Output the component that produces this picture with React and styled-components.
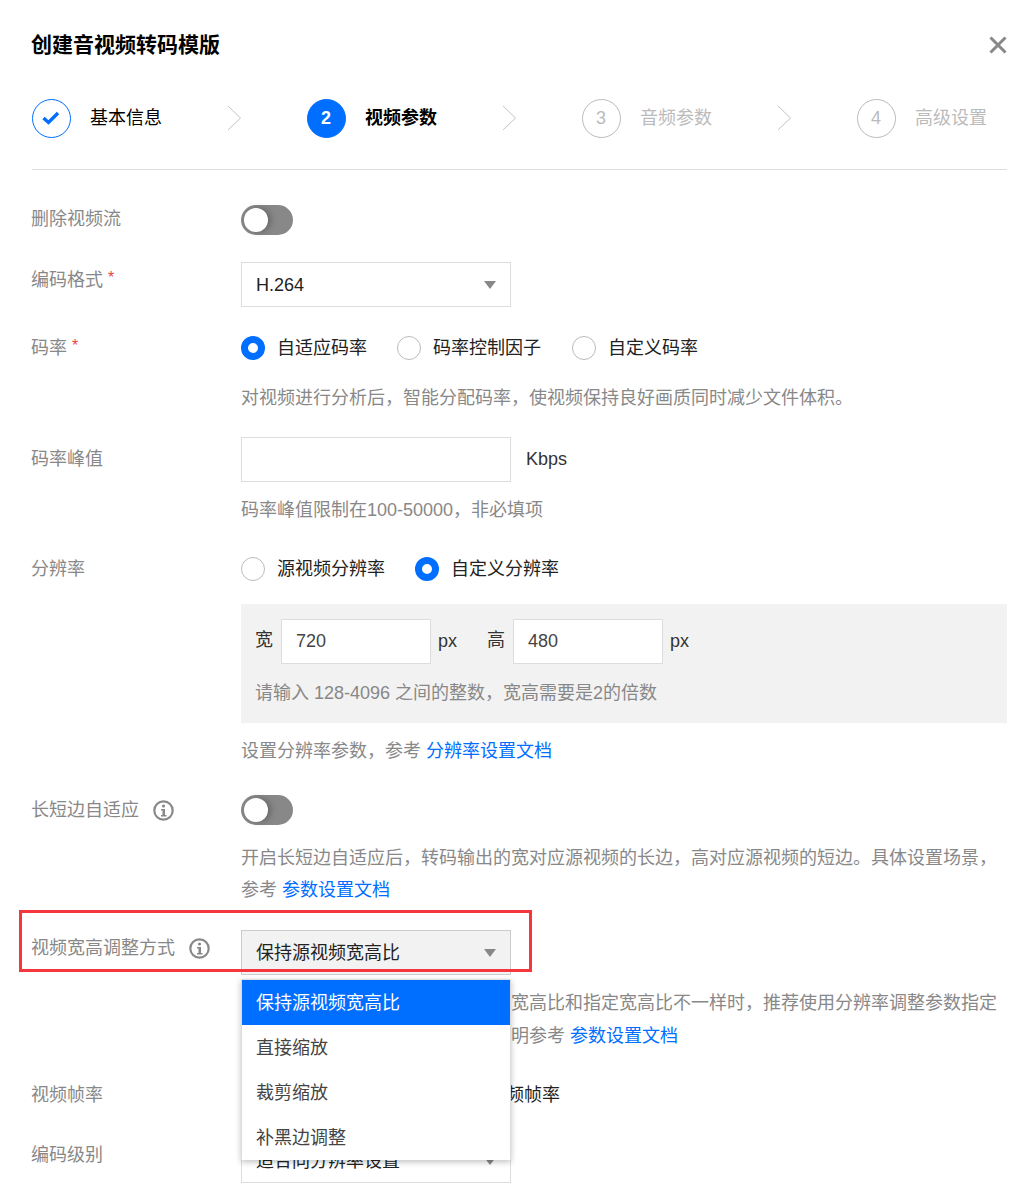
import React from "react";
import styled, { createGlobalStyle } from "styled-components";

const Global = createGlobalStyle`
  html, body { margin: 0; padding: 0; background: #fff; }
  body { font-family: "Liberation Sans", "Noto Sans CJK SC", sans-serif; font-size: 18px; color: #000; }
  *, *::before, *::after { box-sizing: border-box; }
`;

const Dialog = styled.div`
  position: relative;
  width: 1033px;
  height: 1190px;
  overflow: hidden;
  padding: 0 26px 0 31px;
  background: #fff;
`;
const Header = styled.div`
  display: flex;
  justify-content: space-between;
  align-items: center;
  height: 30px;
  margin-top: 30px;
`;
const Title = styled.h2`
  margin: 0;
  font-size: 21px;
  line-height: 30px;
  font-weight: 700;
  color: #000;
`;
const Close = styled.svg`
  width: 18px;
  height: 18px;
  display: block;
`;
const Steps = styled.div`
  display: flex;
  margin: 38px 0 0 1px;
  padding-bottom: 31px;
  border-bottom: 1px solid #ddd;
`;
const Step = styled.div`
  display: flex;
  align-items: center;
  width: 275px;
  height: 40px;
  flex: none;
`;
const StepCircle = styled.div`
  width: 39px;
  height: 39px;
  border-radius: 50%;
  border: 1px solid ${p => (p.$state === "todo" ? "#bbb" : "#006eff")};
  background: ${p => (p.$state === "active" ? "#006eff" : "#fff")};
  color: ${p => (p.$state === "active" ? "#fff" : "#bbb")};
  font-weight: ${p => (p.$state === "active" ? 700 : 400)};
  display: flex;
  align-items: center;
  justify-content: center;
  padding-right: 1px;
  font-size: 18px;
  flex: none;
`;
const StepText = styled.span`
  margin-left: 19px;
  width: 137px;
  font-size: 18px;
  line-height: 24px;
  flex: none;
  color: ${p => (p.$state === "todo" ? "#bbb" : "#000")};
  font-weight: ${p => (p.$state === "active" ? 700 : 400)};
`;
const Chev = styled.svg`
  width: 15px;
  height: 26px;
  display: block;
  flex: none;
`;
const Row = styled.div`
  display: grid;
  grid-template-columns: 210px 1fr;
  align-items: start;
  margin-top: ${p => p.$mt}px;
  position: relative;
`;
const Label = styled.div`
  display: flex;
  align-items: center;
  color: #888;
  font-size: 18px;
  line-height: 24px;
  padding-top: ${p => p.$pt || 0}px;
`;
const Star = styled.span`
  color: #e54545;
  margin-left: 5px;
  font-size: 16px;
  position: relative;
  top: -2px;
`;
const InfoIcon = styled.svg`
  width: 21px;
  height: 21px;
  margin-left: 14px;
  display: block;
`;
const Toggle = styled.div`
  width: 52px;
  height: 30px;
  border-radius: 15px;
  background: #888;
  position: relative;
  &::after {
    content: "";
    position: absolute;
    left: 3px;
    top: 3px;
    width: 24px;
    height: 24px;
    border-radius: 50%;
    background: #fff;
    box-shadow: 3px 0 6px rgba(0,0,0,0.25);
  }
`;
const Select = styled.div`
  width: 270px;
  height: 45px;
  border: 1px solid ${p => (p.$open ? "#ccc" : "#ddd")};
  background: ${p => (p.$open ? "#f2f2f2" : "#fff")};
  display: flex;
  align-items: center;
  justify-content: space-between;
  padding: 0 14px;
  color: #222;
  font-size: 18px;
  line-height: 24px;
`;
const Caret = styled.span`
  width: 0;
  height: 0;
  border-left: 6.5px solid transparent;
  border-right: 6.5px solid transparent;
  border-top: 8px solid #888;
`;
const Radios = styled.div`
  display: flex;
  align-items: center;
  height: 24px;
  position: relative;
  top: 1px;
`;
const Radio = styled.div`
  display: flex;
  align-items: center;
  margin-right: ${p => p.$mr}px;
  font-size: 18px;
  line-height: 24px;
  color: #222;
  &::before {
    content: "";
    width: 24px;
    height: 24px;
    border-radius: 50%;
    flex: none;
    margin-right: 12px;
    background: #fff;
    border: ${p => (p.$on ? "7px solid #006eff" : "1px solid #bbb")};
  }
`;
const Desc = styled.div`
  margin-top: ${p => p.$mt}px;
  margin-left: 210px;
  color: #888;
  font-size: 18px;
  line-height: ${p => p.$lh || 32}px;
  white-space: nowrap;
`;
const Link = styled.a`
  color: #006eff;
  text-decoration: none;
`;
const Inline = styled.div`
  display: flex;
  align-items: center;
`;
const Input = styled.div`
  width: ${p => p.$w}px;
  height: 45px;
  border: 1px solid #ddd;
  background: #fff;
  display: flex;
  align-items: center;
  padding: 0 14px;
  font-size: 18px;
  color: #444;
`;
const Unit = styled.span`
  margin-left: ${p => p.$ml}px;
  color: #333;
  font-size: 18px;
`;
const SizeBox = styled.div`
  margin: 23px 0 0 210px;
  height: 119px;
  background: #f2f2f2;
  padding: 15px 14px;
`;
const SizeLabel = styled.span`
  margin: 0 8px 0 ${p => p.$ml || 0}px;
  padding-bottom: 3px;
  line-height: 24px;
  color: #333;
`;
const SizeHint = styled.div`
  margin-top: 13px;
  color: #888;
  line-height: 32px;
`;
const Menu = styled.div`
  position: absolute;
  left: 210px;
  top: 49px;
  width: 270px;
  background: #fff;
  border: 1px solid #ddd;
  border-bottom: 0;
  box-shadow: 0 2px 6px rgba(0,0,0,0.25);
  z-index: 3;
`;
const MenuItem = styled.div`
  height: 45px;
  display: flex;
  align-items: center;
  padding: 0 14px 4px;
  font-size: 18px;
  background: ${p => (p.$active ? "#006eff" : "#fff")};
  color: ${p => (p.$active ? "#fff" : "#444")};
`;
const Highlight = styled.div`
  position: absolute;
  left: 19px;
  top: 910px;
  width: 513px;
  height: 62px;
  border: 3px solid #f5363c;
  z-index: 4;
  pointer-events: none;
`;

const Check = () => (
  <svg width="18" height="14" viewBox="0 0 18 14" fill="none">
    <path d="M1.5 7l5 4.5L16 2" stroke="#006eff" strokeWidth="3.4" />
  </svg>
);
const Chevron = () => (
  <Chev viewBox="0 0 15 26" fill="none">
    <path d="M1 1l12.5 12L1 25" stroke="#c4c4c4" strokeWidth="1" />
  </Chev>
);
const Info = () => (
  <InfoIcon viewBox="0 0 21 21" fill="none">
    <circle cx="10.5" cy="10.5" r="9.2" stroke="#888" strokeWidth="2.2" />
    <circle cx="10.5" cy="6" r="1.6" fill="#888" />
    <path d="M8 9h4v6h1.5v1.5H8V15h1.5v-4.5H8z" fill="#888" />
  </InfoIcon>
);

const steps = [
  ["基本信息", "done"],
  ["视频参数", "active"],
  ["音频参数", "todo"],
  ["高级设置", "todo"],
];

export default function App() {
  return (
    <Dialog>
      <Global />
      <Header>
        <Title>创建音视频转码模版</Title>
        <Close viewBox="0 0 18 18" fill="none">
          <path d="M1.5 1.5l15 15M16.5 1.5l-15 15" stroke="#888" strokeWidth="3" />
        </Close>
      </Header>
      <Steps>
        {steps.map(([t, s], i) => (
          <Step key={t}>
            <StepCircle $state={s}>{s === "done" ? <Check /> : i + 1}</StepCircle>
            <StepText $state={s}>{t}</StepText>
            {i < 3 && <Chevron />}
          </Step>
        ))}
      </Steps>

      <Row $mt={35}>
        <Label $pt={2}>删除视频流</Label>
        <Toggle />
      </Row>
      <Row $mt={27}>
        <Label $pt={6}>编码格式<Star>*</Star></Label>
        <Select>H.264<Caret /></Select>
      </Row>
      <Row $mt={28}>
        <Label $pt={1}>码率<Star>*</Star></Label>
        <Radios>
          <Radio $on $mr={30}>自适应码率</Radio>
          <Radio $mr={31}>码率控制因子</Radio>
          <Radio $mr={0}>自定义码率</Radio>
        </Radios>
      </Row>
      <Desc $mt={22}>对视频进行分析后，智能分配码率，使视频保持良好画质同时减少文件体积。</Desc>
      <Row $mt={23}>
        <Label $pt={10}>码率峰值</Label>
        <Inline>
          <Input $w={270} />
          <Unit $ml={15}>Kbps</Unit>
        </Inline>
      </Row>
      <Desc $mt={12}>码率峰值限制在100-50000，非必填项</Desc>
      <Row $mt={30}>
        <Label $pt={1}>分辨率</Label>
        <Radios>
          <Radio $mr={30}>源视频分辨率</Radio>
          <Radio $on $mr={0}>自定义分辨率</Radio>
        </Radios>
      </Row>
      <SizeBox>
        <Inline>
          <SizeLabel>宽</SizeLabel>
          <Input $w={150}>720</Input>
          <Unit $ml={7}>px</Unit>
          <SizeLabel $ml={30}>高</SizeLabel>
          <Input $w={150}>480</Input>
          <Unit $ml={7}>px</Unit>
        </Inline>
        <SizeHint>请输入 128-4096 之间的整数，宽高需要是2的倍数</SizeHint>
      </SizeBox>
      <Desc $mt={12}>设置分辨率参数，参考 <Link>分辨率设置文档</Link></Desc>
      <Row $mt={28}>
        <Label $pt={3}>长短边自适应<Info /></Label>
        <Toggle />
      </Row>
      <Desc $mt={17}>
        开启长短边自适应后，转码输出的宽对应源视频的长边，高对应源视频的短边。具体设置场景，<br />
        参考 <Link>参数设置文档</Link>
      </Desc>
      <Row $mt={24}>
        <Label $pt={6}>视频宽高调整方式<Info /></Label>
        <Select $open>保持源视频宽高比<Caret /></Select>
        <Menu>
          <MenuItem $active>保持源视频宽高比</MenuItem>
          <MenuItem>直接缩放</MenuItem>
          <MenuItem>裁剪缩放</MenuItem>
          <MenuItem>补黑边调整</MenuItem>
        </Menu>
      </Row>
      <Desc $mt={12} $lh={33}>
        视频宽高比调整方式：当源视频的宽高比和指定宽高比不一样时，推荐使用分辨率调整参数指定<br />
        输出的宽高比，具体设置场景及说明参考 <Link>参数设置文档</Link>
      </Desc>
      <Row $mt={29}>
        <Label $pt={1}>视频帧率</Label>
        <Radios>
          <Radio $mr={31}>自定义帧率</Radio>
          <Radio $mr={0}>保持源视频帧率</Radio>
        </Radios>
      </Row>
      <Row $mt={31}>
        <Label $pt={5}>编码级别</Label>
        <Select>适合同分辨率设置<Caret /></Select>
      </Row>
      <Highlight />
    </Dialog>
  );
}
